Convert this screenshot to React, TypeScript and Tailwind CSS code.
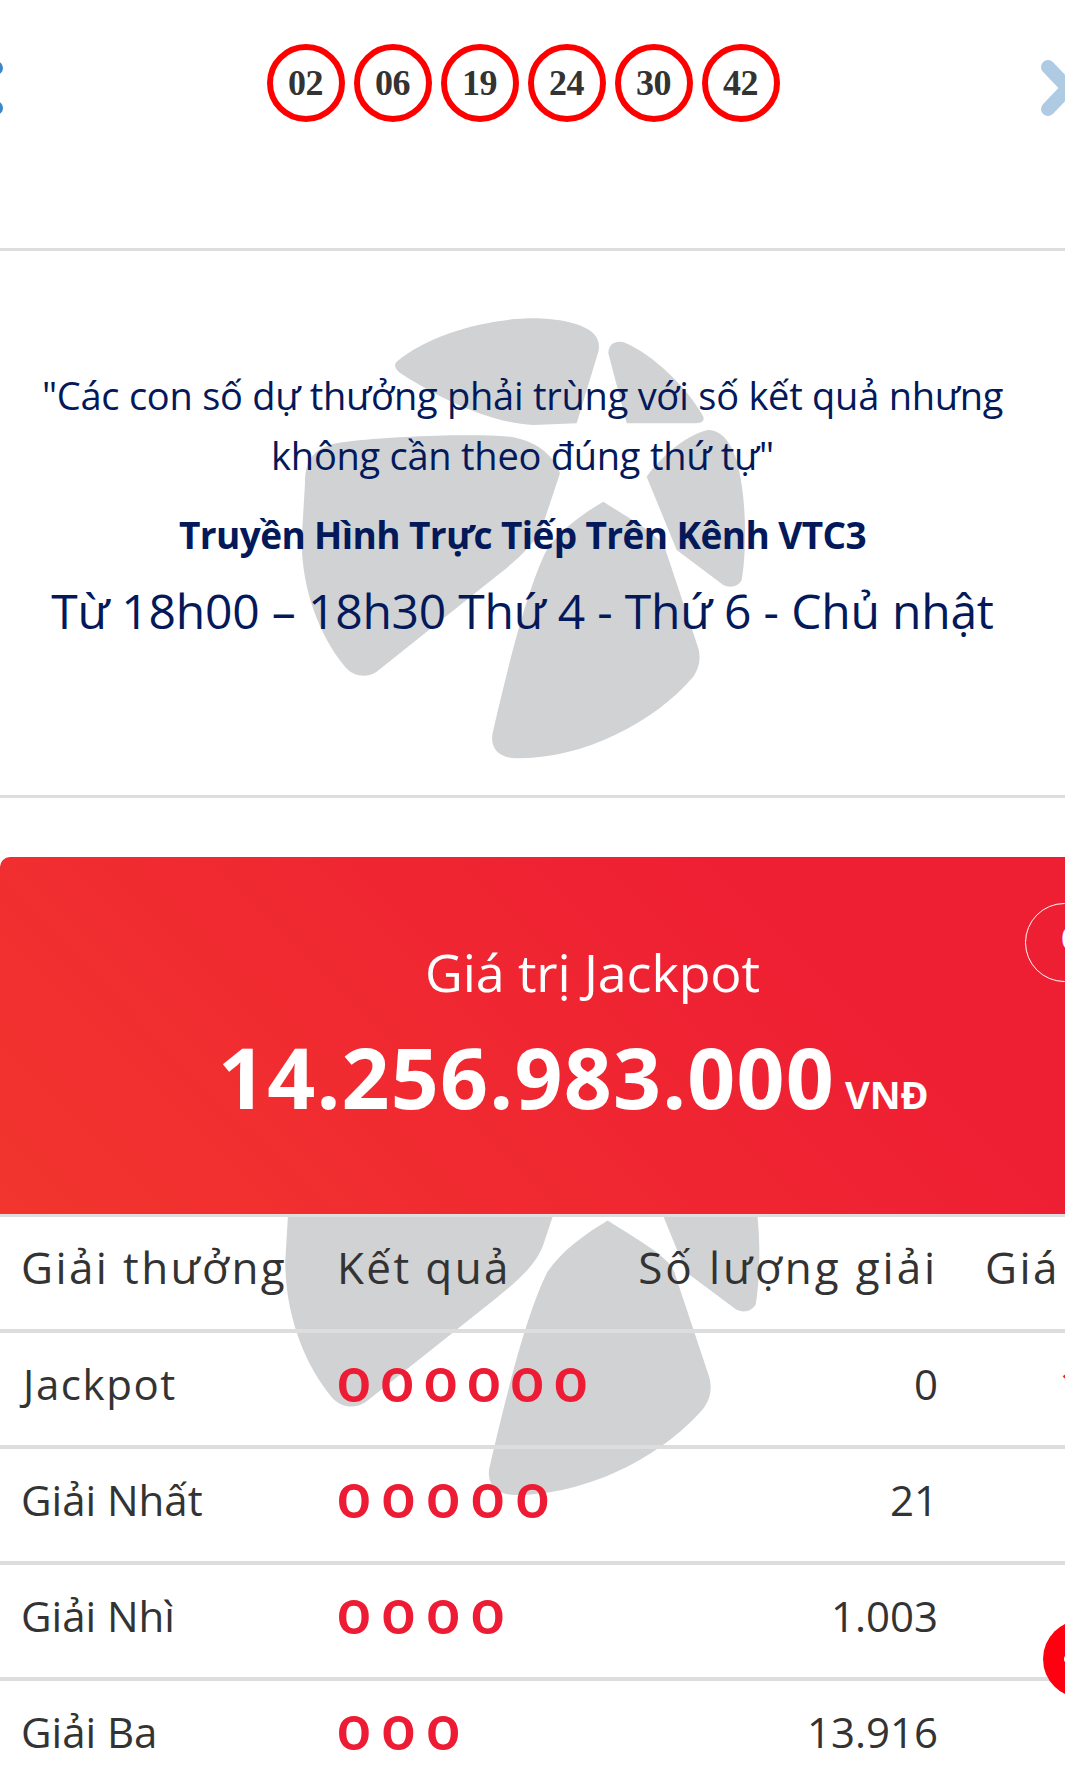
import React from "react";

const sans = "font-['Open_Sans','Noto_Sans',sans-serif]";

// Pinwheel emblem used behind the page content
function Emblem({ className }: { className: string }) {
  return (
    <svg viewBox="0 0 1560 1500" className={className} fill="#d1d2d4">
      <path d="M440 215 C540 130 720 85 850 85 C920 85 1000 100 1030 130 C1045 145 1050 165 1045 185 L980 400 L850 405 C720 400 560 320 460 255 C435 240 430 225 440 215 Z" />
      <path d="M1075 190 C1075 160 1100 150 1125 158 C1210 195 1310 290 1360 380 C1365 395 1350 400 1330 400 L1130 400 Z" />
      <path d="M1190 560 C1240 490 1320 430 1375 420 C1420 420 1450 470 1465 530 C1490 640 1490 780 1475 870 C1465 890 1440 895 1420 885 L1280 780 Z" />
      <path d="M165 580 C165 510 190 465 290 455 C420 440 650 430 780 440 C850 450 910 490 930 550 L880 700 C860 760 800 810 750 850 L380 1145 C350 1165 310 1160 285 1130 C210 1040 155 900 155 750 Z" />
      <path d="M1060 635 C1000 670 930 720 890 780 C840 880 790 1060 730 1320 C715 1370 745 1405 800 1405 C1000 1405 1210 1300 1330 1160 C1350 1130 1355 1100 1340 1060 L1250 790 C1240 740 1160 700 1060 635 Z" />
    </svg>
  );
}

function Ball({ n }: { n: string }) {
  return (
    <div className="flex h-[78px] w-[78px] items-center justify-center rounded-full border-[6px] border-[#ff0000] bg-white font-['Liberation_Serif',serif] text-[36px] font-bold tracking-[-0.5px] text-[#333333]">
      {n}
    </div>
  );
}

function Matches({ count }: { count: number }) {
  return (
    <div className="mt-[4px] flex font-['Roboto',sans-serif] text-[49px] font-bold leading-none text-[#ed1c34]">
      {Array.from({ length: count }).map((_, i) => (
        <span key={i} className="w-[44.6px]">O</span>
      ))}
    </div>
  );
}

const prizes = [
  { name: "Giải Nhất", count: 5, winners: "21" },
  { name: "Giải Nhì", count: 4, winners: "1.003" },
  { name: "Giải Ba", count: 3, winners: "13.916" },
];

const rowGrid = "grid grid-cols-[316px_260px_341px_200px] items-center pl-[21px]";

export default function App() {
  return (
    <div className={`relative h-[1787px] w-[1065px] overflow-hidden bg-white ${sans}`}>
      <Emblem className="absolute left-[250px] top-[290px] h-[500px] w-[520px]" />
      <Emblem className="absolute left-[230px] top-[994px] h-[535px] w-[556px]" />

      {/* Winning numbers */}
      <section className="relative flex h-[248px] justify-center gap-[9px] pr-[19px] pt-[44px]">
        {["02", "06", "19", "24", "30", "42"].map((n) => (
          <Ball key={n} n={n} />
        ))}
        <svg className="absolute left-0 top-[56px] h-[64px] w-[6px]" viewBox="0 0 6 64" fill="none" stroke="#3b87c8" strokeWidth="14" strokeLinecap="round" strokeLinejoin="round">
          <polyline points="-4,12 -25,32 -4,52" />
        </svg>
        <svg className="absolute right-0 top-[56px] h-[64px] w-[26px]" viewBox="0 0 26 64" fill="none" stroke="#aecbe3" strokeWidth="14" strokeLinecap="round" strokeLinejoin="round">
          <polyline points="9,11 29,32 9,53" />
        </svg>
      </section>

      {/* Rules and broadcast times */}
      <section className="relative flex h-[550px] flex-col items-center border-y-[3px] border-[#dddddd] pr-[20px] pt-[114px] text-center text-[#03195a]">
        <p className="w-[1030px] text-[38px] leading-[60px] tracking-[-0.25px]">
          "Các con số dự thưởng phải trùng với số kết quả nhưng
          <br />
          không cần theo đúng thứ tự"
        </p>
        <p className="mt-[24px] text-[37px] font-bold leading-[52px] tracking-[-0.6px]">Truyền Hình Trực Tiếp Trên Kênh VTC3</p>
        <p className="mt-[18px] text-[48px] leading-[64px] tracking-[-0.2px]">Từ 18h00 – 18h30 Thứ 4 - Thứ 6 - Chủ nhật</p>
      </section>

      {/* Jackpot banner */}
      <section className="relative mt-[59px] h-[357px] rounded-tl-[10px] bg-[linear-gradient(45deg,#f2352e,#ee1f33_75%)] text-white">
        <div className="pl-[425px] pt-[79px] text-[52px] font-normal leading-[72px] tracking-[-0.1px]">Giá trị Jackpot</div>
        <div className="mt-[13px] flex items-baseline pl-[218px]">
          <span className="text-[84px] font-bold leading-[112px] tracking-[1.2px]">14.256.983.000</span>
          <span className="ml-[10px] text-[38px] font-bold">VNĐ</span>
        </div>
        <div className="absolute left-[1025px] top-[46px] flex h-[79px] w-[79px] items-center justify-center rounded-full border border-white pb-[10px] pl-[10px] text-[28px] font-bold">
          0
        </div>
      </section>

      {/* Prize table */}
      <section className="relative border-t-[3px] border-[#dddddd] text-[#333333]">
        <div className={`${rowGrid} h-[116px] border-b-[4px] border-[#dddddd] pb-[12px] text-[44px] font-medium tracking-[2.4px]`}>
          <span className="whitespace-nowrap">Giải thưởng</span>
          <span className="whitespace-nowrap">Kết quả</span>
          <span className="whitespace-nowrap text-right tracking-[2.9px]">Số lượng giải</span>
          <span className="ml-[47px]">Giá</span>
        </div>
        <div className={`${rowGrid} h-[116px] border-b-[4px] border-[#dddddd] pb-[12px] text-[42px]`}>
          <span className="ml-[2px] tracking-[1.6px]">Jackpot</span>
          <Matches count={6} />
          <span className="text-right">0</span>
          <span className="ml-[121px] whitespace-nowrap text-[#ed1c34]">14.256.983.000</span>
        </div>
        {prizes.map((p) => (
          <div key={p.name} className={`${rowGrid} h-[116px] border-b-[4px] border-[#dddddd] pb-[12px] text-[42px]`}>
            <span>{p.name}</span>
            <Matches count={p.count} />
            <span className="text-right">{p.winners}</span>
          </div>
        ))}
      </section>

      {/* Floating action button */}
      <div className="absolute left-[1043px] top-[1620px] flex h-[78px] w-[78px] items-center rounded-full bg-[#ff0011]">
        <span className="ml-[21px] h-[8px] w-[8px] rounded-full bg-white" />
      </div>
    </div>
  );
}
